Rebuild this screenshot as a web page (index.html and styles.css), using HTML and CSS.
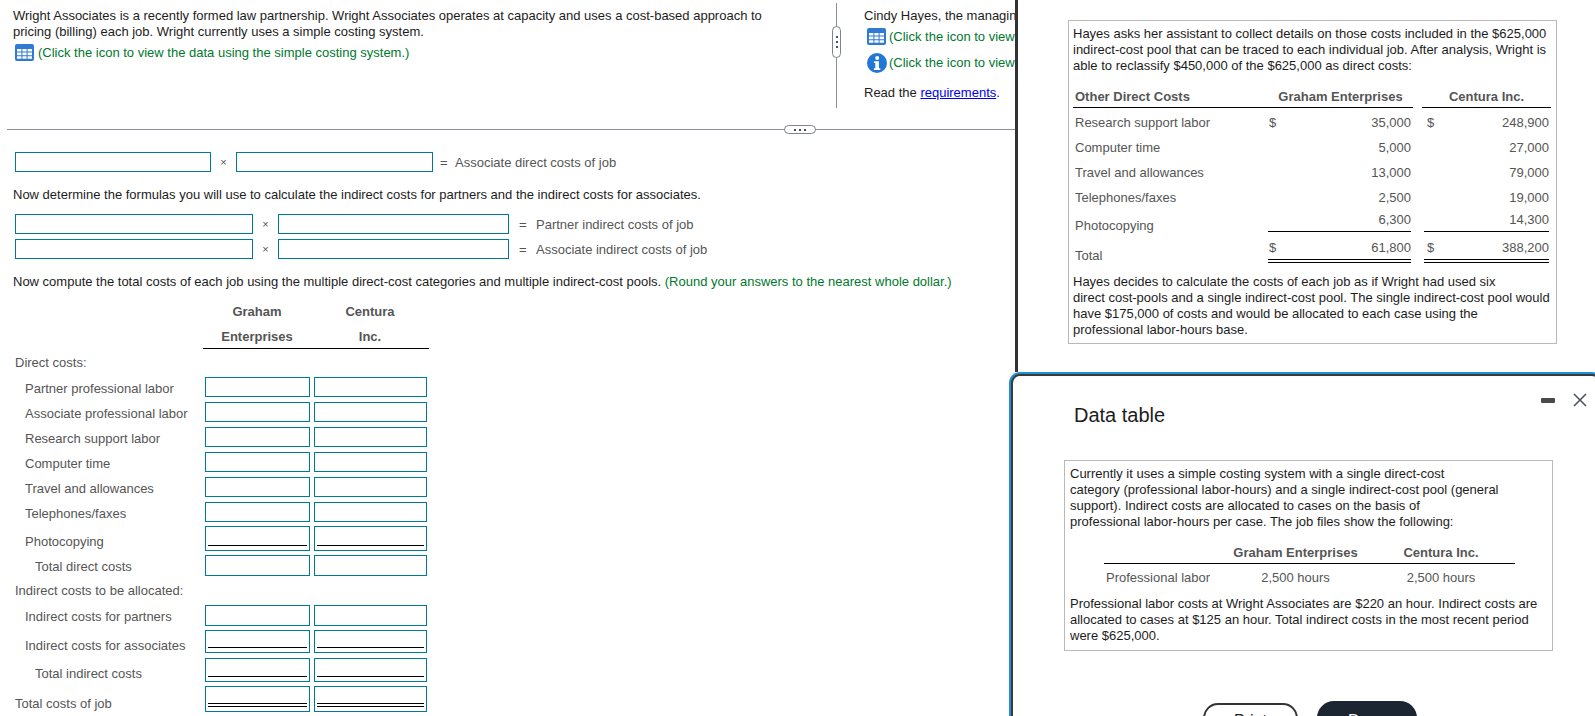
FILE: index.html
```html
<!DOCTYPE html>
<html lang="en">
<head>
<meta charset="utf-8">
<title>Wright Associates</title>
<link rel="stylesheet" href="styles.css">
</head>
<body>
<svg class="defs" width="0" height="0" aria-hidden="true">
  <symbol id="grid-icon" viewBox="0 0 19 17">
    <rect width="19" height="17" rx="2" fill="#2f7ad3"/>
    <path d="M2 5h4.4v2.6H2zM7.4 5h4.2v2.6H7.4zM12.6 5H17v2.6h-4.4zM2 8.6h4.4v2.6H2zM7.4 8.6h4.2v2.6H7.4zM12.6 8.6H17v2.6h-4.4zM2 12.2h4.4v2.6H2zM7.4 12.2h4.2v2.6H7.4zM12.6 12.2H17v2.6h-4.4z" fill="#fff"/>
  </symbol>
  <symbol id="info-icon" viewBox="0 0 20 20">
    <circle cx="10" cy="10" r="10" fill="#2277d4"/>
    <circle cx="10.2" cy="4.9" r="2" fill="#fff"/>
    <path d="M6.9 8.2h5v7.1h1.4v1.8H6.9v-1.8h1.4v-5.3H6.9z" fill="#fff"/>
  </symbol>
</svg>

<main class="main">
  <section class="top">
    <div class="pane-left">
      <p class="para">Wright Associates is a recently formed law partnership. Wright Associates operates at capacity and uses a cost-based approach to<br>pricing (billing) each job. Wright currently uses a simple costing system.</p>
      <p class="hint hint-first"><svg class="ico-grid"><use href="#grid-icon"/></svg><span>(Click the icon to view the data using the simple costing system.)</span></p>
    </div>
    <div class="vdivider"><span class="vhandle"><i></i><i></i><i></i></span></div>
    <div class="pane-right">
      <p class="para">Cindy Hayes, the managin</p>
      <p class="hint hint-a"><svg class="ico-grid"><use href="#grid-icon"/></svg><span>(Click the icon to view</span></p>
      <p class="hint hint-b"><svg class="ico-info"><use href="#info-icon"/></svg><span>(Click the icon to view</span></p>
      <p class="para read">Read the <a href="#">requirements</a>.</p>
    </div>
  </section>
  <div class="hdivider"><span class="hhandle"><i></i><i></i><i></i></span></div>

  <section class="work">
    <div class="formula f-one">
      <input class="fld w196" aria-label="a"><span class="times t-one">×</span><input class="fld w197" aria-label="b"><span class="result"><span class="eq">=</span>Associate direct costs of job</span>
    </div>
    <p class="para now-1">Now determine the formulas you will use to calculate the indirect costs for partners and the indirect costs for associates.</p>
    <div class="formula f-two">
      <input class="fld w238" aria-label="a"><span class="times t-two">×</span><input class="fld w231" aria-label="b"><span class="result r-two"><span class="eq eq-wide">=</span>Partner indirect costs of job</span>
    </div>
    <div class="formula f-three">
      <input class="fld w238" aria-label="a"><span class="times t-two">×</span><input class="fld w231" aria-label="b"><span class="result r-two"><span class="eq eq-wide">=</span>Associate indirect costs of job</span>
    </div>
    <p class="para now-2">Now compute the total costs of each job using the multiple direct-cost categories and multiple indirect-cost pools. <span class="green">(Round your answers to the nearest whole dollar.)</span></p>

    <div class="cost-head">
      <div>Graham<br>Enterprises</div>
      <div>Centura<br>Inc.</div>
    </div>

    <p class="group">Direct costs:</p>
    <div class="row h25 lab4 first"><span class="in1">Partner professional labor</span><input class="fld cell" aria-label="g"><input class="fld cell2" aria-label="c"></div>
    <div class="row h25 lab4"><span class="in1">Associate professional labor</span><input class="fld cell" aria-label="g"><input class="fld cell2" aria-label="c"></div>
    <div class="row h25 lab4"><span class="in1">Research support labor</span><input class="fld cell" aria-label="g"><input class="fld cell2" aria-label="c"></div>
    <div class="row h25 lab4"><span class="in1">Computer time</span><input class="fld cell" aria-label="g"><input class="fld cell2" aria-label="c"></div>
    <div class="row h25 lab4"><span class="in1">Travel and allowances</span><input class="fld cell" aria-label="g"><input class="fld cell2" aria-label="c"></div>
    <div class="row h24 lab4"><span class="in1">Telephones/faxes</span><input class="fld cell" aria-label="g"><input class="fld cell2" aria-label="c"></div>
    <div class="row h29 lab8 tall25"><span class="in1">Photocopying</span><input class="fld cell rule" aria-label="g"><input class="fld cell2 rule" aria-label="c"></div>
    <div class="row h28 lab4 tall21"><span class="in2">Total direct costs</span><input class="fld cell" aria-label="g"><input class="fld cell2" aria-label="c"></div>
    <p class="group group-2">Indirect costs to be allocated:</p>
    <div class="row h25 lab4 tall21 first"><span class="in1">Indirect costs for partners</span><input class="fld cell" aria-label="g"><input class="fld cell2" aria-label="c"></div>
    <div class="row h28 lab8 tall23"><span class="in1">Indirect costs for associates</span><input class="fld cell rule" aria-label="g"><input class="fld cell2 rule" aria-label="c"></div>
    <div class="row h28 lab8 tall24"><span class="in2">Total indirect costs</span><input class="fld cell rule" aria-label="g"><input class="fld cell2 rule" aria-label="c"></div>
    <div class="row h28 lab10 tall26"><span>Total costs of job</span><input class="fld cell rule2" aria-label="g"><input class="fld cell2 rule2" aria-label="c"></div>
  </section>
</main>

<aside class="window">
  <div class="box box-top">
    <p class="para">Hayes asks her assistant to collect details on those costs included in the $625,000<br>indirect-cost pool that can be traced to each individual job. After analysis, Wright is<br>able to reclassify $450,000 of the $625,000 as direct costs:</p>
    <div class="dt-head">
      <div class="th th-left">Other Direct Costs</div>
      <div class="th">Graham Enterprises</div>
      <div class="th-gap"></div>
      <div class="th">Centura Inc.</div>
    </div>
    <div class="dt-row"><span class="lbl">Research support labor</span><span class="money"><span class="s1">$</span><span>35,000</span></span><span></span><span class="money"><span class="s2">$</span><span>248,900</span></span></div>
    <div class="dt-row"><span class="lbl">Computer time</span><span class="money"><span></span><span>5,000</span></span><span></span><span class="money"><span></span><span>27,000</span></span></div>
    <div class="dt-row"><span class="lbl">Travel and allowances</span><span class="money"><span></span><span>13,000</span></span><span></span><span class="money"><span></span><span>79,000</span></span></div>
    <div class="dt-row"><span class="lbl">Telephones/faxes</span><span class="money"><span></span><span>2,500</span></span><span></span><span class="money"><span></span><span>19,000</span></span></div>
    <div class="dt-row dt-photo"><span class="lbl">Photocopying</span><span class="money single"><span></span><span>6,300</span></span><span></span><span class="money single"><span></span><span>14,300</span></span></div>
    <div class="dt-row dt-total"><span class="lbl">Total</span><span class="money double"><span class="s1">$</span><span>61,800</span></span><span></span><span class="money double"><span class="s2">$</span><span>388,200</span></span></div>
    <p class="para after">Hayes decides to calculate the costs of each job as if Wright had used six<br>direct cost-pools and a single indirect-cost pool. The single indirect-cost pool would<br>have $175,000 of costs and would be allocated to each case using the<br>professional labor-hours base.</p>
  </div>
</aside>

<aside class="modal">
  <div class="controls">
    <span class="minimize"></span>
    <svg class="close" viewBox="0 0 14 14" aria-label="Close"><path d="M1 1l12 12M13 1L1 13" stroke="#4a5560" stroke-width="1.6" fill="none"/></svg>
  </div>
  <h2 class="modal-title">Data table</h2>
  <div class="box box-modal">
    <p class="para">Currently it uses a simple costing system with a single direct-cost<br>category (professional labor-hours) and a single indirect-cost pool (general<br>support). Indirect costs are allocated to cases on the basis of<br>professional labor-hours per case. The job files show the following:</p>
    <div class="mt-head"><span></span><span>Graham Enterprises</span><span>Centura Inc.</span></div>
    <div class="mt-row"><span class="mt-label">Professional labor</span><span>2,500 hours</span><span>2,500 hours</span></div>
    <p class="para mt-after">Professional labor costs at Wright Associates are $220 an hour. Indirect costs are<br>allocated to cases at $125 an hour. Total indirect costs in the most recent period<br>were $625,000.</p>
  </div>
  <div class="buttons">
    <button class="btn btn-print">Print</button>
    <button class="btn btn-done">Done</button>
  </div>
</aside>
</body>
</html>
```

FILE: styles.css
```css
* { box-sizing: border-box; }
html, body { margin: 0; padding: 0; }
body {
  position: relative;
  width: 1595px;
  height: 716px;
  overflow: hidden;
  background: #fff;
  font-family: "Liberation Sans", Arial, sans-serif;
  font-size: 13px;
  line-height: 16px;
  color: #1c1c1c;
}
p { margin: 0; }
.defs { position: absolute; }

.main { width: 1015px; height: 716px; overflow: hidden; }

.top { display: flex; height: 129px; }
.pane-left { width: 829px; padding: 8px 0 0 13px; flex: none; }
.pane-right { flex: 1; min-width: 0; padding: 8px 0 0 27px; overflow: hidden; white-space: nowrap; }

.hint { display: flex; align-items: center; color: #00782e; }
.hint svg { flex: none; margin-right: 4px; }
.hint-first { margin: 4px 0 0 2px; }
.hint-a { margin-top: 4px; padding-left: 3px; }
.hint-a svg { margin-right: 3px; }
.hint-b { margin-top: 8px; padding-left: 3px; }
.hint-b svg { margin-right: 2px; }
.read { margin-top: 12px; }
.read a { color: #0000ee; }
.ico-grid { width: 19px; height: 17px; }
.ico-info { width: 20px; height: 20px; }

.vdivider { position: relative; width: 1px; margin: 3px 0 21px 7px; background: #8b8f9b; flex: none; }
.vhandle {
  position: absolute; left: -4px; top: 23px; width: 9px; height: 32px;
  border: 1px solid #7d8290; border-radius: 5px; background: #fff;
  display: flex; flex-direction: column; align-items: center; justify-content: center; gap: 3px;
}
.vhandle i, .hhandle i { width: 2px; height: 2px; background: #4b5060; display: block; }

.hdivider { position: relative; height: 1px; margin-left: 7px; background: #8b8f9b; }
.hhandle {
  position: absolute; left: 777px; top: -4px; width: 32px; height: 9px;
  border: 1px solid #7d8290; border-radius: 5px; background: #fff;
  display: flex; align-items: center; justify-content: center; gap: 3px;
}

.work { padding: 22px 0 0 13px; }
.formula { display: flex; align-items: center; height: 20px; padding-left: 2px; color: #555; }
.f-two { margin-top: 11px; }
.f-three { margin-top: 5px; }
.fld {
  display: block; margin: 0; padding: 0; height: 20px;
  border: 1px solid #007a99; border-radius: 0; background-color: #fff; outline: 0;
}
.w196 { width: 196px; }
.w197 { width: 197px; }
.w238 { width: 238px; }
.w231 { width: 231px; }
.times { font-size: 11px; text-align: center; color: #555; flex: none; }
.t-one { width: 25px; }
.t-two { width: 25px; }
.result { margin-left: 7px; white-space: nowrap; padding-top: 2px; }
.r-two { margin-left: 10px; }
.eq { display: inline-block; width: 15px; }
.eq-wide { width: 17px; }
.now-1 { margin-top: 15px; }
.now-2 { margin-top: 15px; }
.green { color: #00782e; }

.cost-head {
  display: grid; grid-template-columns: 108px 118px;
  width: 226px; margin: 9px 0 0 190px;
  border-bottom: 1px solid #000;
  text-align: center; font-weight: 700; color: #555;
  line-height: 25px; height: 50px;
}

.group { margin: 6px 0 0 2px; color: #555; }
.group-2 { margin-top: 0; }

.row {
  display: grid; grid-template-columns: 190px 105px 113px; column-gap: 0;
  align-items: start; color: #555; padding-left: 2px; white-space: nowrap;
  width: 420px;
}
.row.first { margin-top: 6px; }
.row .cell2 { margin-left: 4px; width: 113px; }
.row .cell { width: 105px; }
.h24 { height: 24px; }
.h25 { height: 25px; }
.h28 { height: 28px; }
.h29 { height: 29px; }
.lab4 > span { padding-top: 4px; }
.lab8 > span { padding-top: 8px; }
.lab10 > span { padding-top: 10px; }
.in1 { padding-left: 10px; }
.in2 { padding-left: 20px; }
.tall21 .fld { height: 21px; }
.tall23 .fld { height: 23px; }
.tall24 .fld { height: 24px; }
.tall25 .fld { height: 25px; }
.tall26 .fld { height: 26px; }
.rule {
  background-image: linear-gradient(#000, #000);
  background-repeat: no-repeat;
  background-position: center bottom 4px;
  background-size: calc(100% - 4px) 1px;
}
.rule2 {
  background-image: linear-gradient(#000, #000), linear-gradient(#000, #000);
  background-repeat: no-repeat;
  background-position: center bottom 4px, center bottom 7px;
  background-size: calc(100% - 4px) 1px, calc(100% - 4px) 1px;
}

.window {
  position: absolute; left: 1015px; top: 0; width: 580px; height: 372px;
  background: #fff; border-left: 3px solid #333; padding: 20px 0 0 50px;
}
.box { border: 1px solid #b9b9b9; background: #fff; width: 489px; }
.box-top { padding: 5px 0 5px 4px; height: 324px; }
.dt-head {
  display: grid; grid-template-columns: 195px 145px 9px 129px;
  margin-top: 14px; color: #555; font-weight: 700;
}
.th { border-bottom: 1px solid #000; padding: 1px 0 2px; text-align: center; height: 20px; }
.th-left { text-align: left; padding-left: 2px; }
.th-gap { height: 20px; }
.dt-row {
  display: grid; grid-template-columns: 195px 143px 13px 125px;
  height: 25px; padding-top: 6px; color: #555; align-items: start;
}
.lbl { padding-left: 2px; }
.money { display: flex; justify-content: space-between; }
.s1 { padding-left: 1px; }
.s2 { padding-left: 3px; }
.dt-head + .dt-row { margin-top: 1px; }
.dt-photo { padding-top: 3px; }
.dt-photo .lbl { padding-top: 6px; }
.single { border-bottom: 1px solid #000; padding-bottom: 3px; }
.dt-total { height: 29px; padding-top: 6px; }
.dt-total .lbl { padding-top: 8px; }
.double { border-bottom: 4px double #000; padding-bottom: 3px; }
.after { margin-top: 11px; }

.modal {
  position: absolute; left: 1011px; top: 374px; width: 590px; height: 350px;
  background: #fff; border: 2px solid #3a3a3a; border-radius: 9px 9px 0 0;
  box-shadow: 0 0 0 2px #1f8fd8; padding: 27px 0 0 61px;
}
.controls { position: absolute; left: 528px; top: 17px; display: flex; align-items: center; gap: 18px; }
.minimize { display: block; width: 14px; height: 5px; background: #4a4a4a; border-radius: 1px; }
.close { display: block; width: 14px; height: 14px; }
.modal-title { margin: 0; font-size: 20px; line-height: 24px; font-weight: 400; color: #1c1c1c; }
.box-modal { margin: 33px 0 0 -10px; padding: 5px 0 6px 5px; height: 191px; }
.mt-head, .mt-row {
  display: grid; grid-template-columns: 120px 143px 148px;
  width: 411px; margin-left: 34px; text-align: center; color: #555;
}
.mt-head { margin-top: 14px; font-weight: 700; border-bottom: 1px solid #000; padding: 1px 0 2px; height: 20px; }
.mt-row { padding-top: 6px; height: 24px; }
.mt-label { text-align: left; padding-left: 2px; white-space: nowrap; }
.mt-after { margin-top: 8px; }
.buttons { display: flex; align-items: center; gap: 19px; margin: 50px 0 0 129px; }
.btn { font-family: inherit; font-size: 16px; line-height: 18px; padding: 5px 0 0; border-radius: 17px; }
.btn-print { width: 95px; height: 30px; background: #fff; border: 2px solid #333; color: #222; }
.btn-done { width: 100px; height: 34px; background: #1c2532; border: 0; color: #fff; }
```
